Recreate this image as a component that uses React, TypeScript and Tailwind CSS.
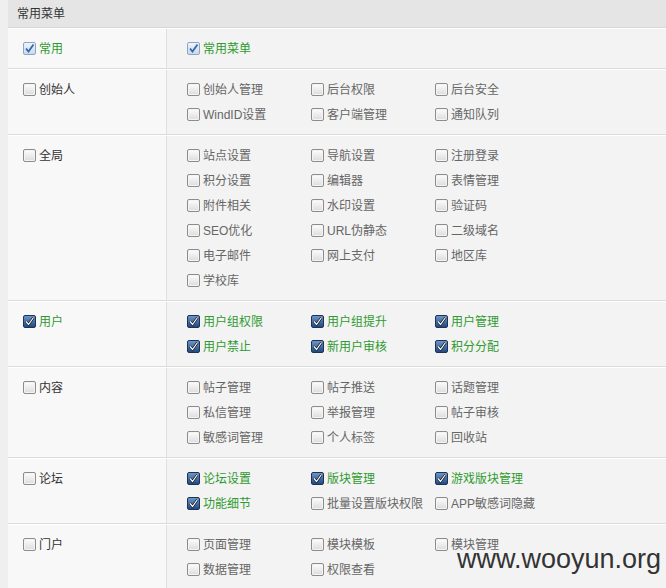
type Item = { label: string; checked?: boolean };
type Row = { title: string; checked?: boolean; light?: boolean; items: Item[] };

const rows: Row[] = [
  { title: '常用', checked: true, light: true, items: [{ label: '常用菜单', checked: true }] },
  {
    title: '创始人',
    items: [
      { label: '创始人管理' },
      { label: '后台权限' },
      { label: '后台安全' },
      { label: 'WindID设置' },
      { label: '客户端管理' },
      { label: '通知队列' },
    ],
  },
  {
    title: '全局',
    items: [
      { label: '站点设置' },
      { label: '导航设置' },
      { label: '注册登录' },
      { label: '积分设置' },
      { label: '编辑器' },
      { label: '表情管理' },
      { label: '附件相关' },
      { label: '水印设置' },
      { label: '验证码' },
      { label: 'SEO优化' },
      { label: 'URL伪静态' },
      { label: '二级域名' },
      { label: '电子邮件' },
      { label: '网上支付' },
      { label: '地区库' },
      { label: '学校库' },
    ],
  },
  {
    title: '用户',
    checked: true,
    items: [
      { label: '用户组权限', checked: true },
      { label: '用户组提升', checked: true },
      { label: '用户管理', checked: true },
      { label: '用户禁止', checked: true },
      { label: '新用户审核', checked: true },
      { label: '积分分配', checked: true },
    ],
  },
  {
    title: '内容',
    items: [
      { label: '帖子管理' },
      { label: '帖子推送' },
      { label: '话题管理' },
      { label: '私信管理' },
      { label: '举报管理' },
      { label: '帖子审核' },
      { label: '敏感词管理' },
      { label: '个人标签' },
      { label: '回收站' },
    ],
  },
  {
    title: '论坛',
    items: [
      { label: '论坛设置', checked: true },
      { label: '版块管理', checked: true },
      { label: '游戏版块管理', checked: true },
      { label: '功能细节', checked: true },
      { label: '批量设置版块权限' },
      { label: 'APP敏感词隐藏' },
    ],
  },
  {
    title: '门户',
    items: [
      { label: '页面管理' },
      { label: '模块模板' },
      { label: '模块管理' },
      { label: '数据管理' },
      { label: '权限查看' },
    ],
  },
];

function Box({ checked, light }: { checked?: boolean; light?: boolean }) {
  if (checked && light) {
    return (
      <span className="inline-flex h-[13px] w-[13px] shrink-0 items-center justify-center rounded-[2px] border border-[#8ea6c4] bg-gradient-to-b from-[#eef4fb] to-[#c9daee]">
        <svg width="11" height="11" viewBox="0 0 11 11">
          <path d="M2 5.5 L4.5 8.5 L9.5 1.5" fill="none" stroke="#3566a8" strokeWidth="1.8" />
        </svg>
      </span>
    );
  }
  if (checked) {
    return (
      <span className="inline-flex h-[13px] w-[13px] shrink-0 items-center justify-center rounded-[2px] border border-[#1d3355] bg-gradient-to-b from-[#6d96c8] to-[#1f4a85]">
        <svg width="11" height="11" viewBox="0 0 11 11">
          <path d="M2 5.5 L4.5 8.5 L9.5 1.5" fill="none" stroke="#111" strokeWidth="2.4" />
          <path d="M2 5.5 L4.5 8.5 L9.5 1.5" fill="none" stroke="#fff" strokeWidth="1.2" />
        </svg>
      </span>
    );
  }
  return (
    <span className="inline-block h-[13px] w-[13px] shrink-0 rounded-[2px] border border-[#8c8c8c] bg-gradient-to-b from-[#fdfdfd] to-[#dcdcdc] shadow-[inset_0_0_0_1px_#f4f4f4]" />
  );
}

export default function App() {
  return (
    <div
      className="relative h-[588px] w-[666px] overflow-hidden bg-[#efefef] text-[12px]"
      style={{ fontFamily: '"Liberation Sans", "Noto Sans CJK SC", sans-serif' }}
    >
      <div className="ml-2 w-[658px]">
        <div className="flex h-[28px] items-center border-b border-[#d8d8d8] bg-[#e5e5e5] pl-[9px] text-[#333]">
          常用菜单
        </div>

        {rows.map((row) => (
          <div key={row.title} className="flex border-t border-b border-t-white border-b-[#dcdcdc]">
            <div className="w-[159px] shrink-0 border-r border-[#e1e1e1] bg-[#f8f8f8] pl-[15px] pt-[7px] pb-[7px]">
              <div className="flex h-[25px] items-center gap-[3px]">
                <Box checked={row.checked} light={row.light} />
                <span className={row.checked ? 'text-[#2f9a2f]' : 'text-[#333]'}>{row.title}</span>
              </div>
            </div>
            <div className="grid flex-1 grid-cols-[124px_124px_124px] bg-[#f3f3f3] pl-[20px] pt-[7px] pb-[7px]">
              {row.items.map((it) => (
                <div key={it.label} className="flex h-[25px] items-center gap-[3px] whitespace-nowrap">
                  <Box checked={it.checked} light={row.light} />
                  <span className={it.checked ? 'text-[#2f9a2f]' : 'text-[#666]'}>{it.label}</span>
                </div>
              ))}
            </div>
          </div>
        ))}
      </div>

      <div className="absolute left-[457px] top-[546px] text-[27px] leading-none text-[#333]">www.wooyun.org</div>
    </div>
  );
}
